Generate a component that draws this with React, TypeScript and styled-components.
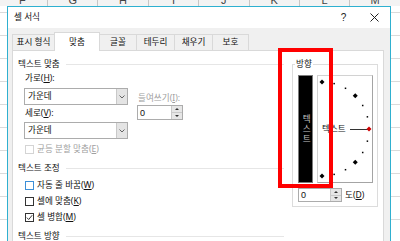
import styled, { createGlobalStyle } from "styled-components";

const GlobalStyle = createGlobalStyle`
    html, body {
        margin:0;
        padding:0;
        background:#fff;
        overflow:hidden;
    }
    body {
        font-family: "Noto Sans", "Noto Sans CJK KR", sans-serif;
        font-size: 8.6px;
        color:#111;
    }
`;

//spreadsheet behind the dialog
const Sheet = styled.div`
    position:relative;
    width:400px;
    height:241px;
    overflow:hidden;
    background-color:#fff;
    background-image: linear-gradient(to bottom, #dadada 1px, transparent 1px);
    background-size: 100% 23px;
    background-position: 0 12px;
`;
const ColumnHeader = styled.div`
    display:flex;
    height:6px;
    overflow:hidden;
    margin-left:-2.4px;
    background-color:#f3f3f3;
`;
const ColumnCell = styled.div`
    flex:0 0 50.4px;
    box-sizing:border-box;
    border-right:1px solid #c6c6c6;
    display:flex;
    align-items:flex-end;
    justify-content:center;
    font-family:"Liberation Sans", sans-serif;
    font-size:11px;
    line-height:11px;
    color:#444;
`;

//dialog window
const Dialog = styled.div`
    position:absolute;
    left:7px;
    top:6px;
    width:384px;
    height:250px;
    box-sizing:border-box;
    border:1px solid #2fb0d0;
    background-color:#f0f0f0;
    display:flex;
    flex-direction:column;
`;
const TitleBar = styled.div`
    height:21px;
    flex:0 0 21px;
    background-color:#fff;
    display:flex;
    align-items:center;
    padding-left:6px;
    line-height:21px;
`;
const TitleButtons = styled.div`
    margin-left:auto;
    display:flex;
`;
const TitleButton = styled.div`
    width:31px;
    height:21px;
    display:flex;
    align-items:center;
    justify-content:center;
    font-family:"Liberation Sans", sans-serif;
    font-size:10px;
    color:#222;
`;
const Body = styled.div`
    flex:1;
    padding:4px 6px 0 4px;
    display:flex;
    flex-direction:column;
`;

//tabs
const TabRow = styled.div`
    display:flex;
    align-items:flex-end;
    height:18px;
`;
const Tab = styled.div<{ $width: number; $active?: boolean }>`
    width:${p => p.$width}px;
    height:${p => (p.$active ? 19 : 16)}px;
    box-sizing:border-box;
    border:1px solid #d9d9d9;
    border-bottom:none;
    margin-right:-1px;
    margin-bottom:${p => (p.$active ? -1 : 0)}px;
    background-color:${p => (p.$active ? "#fff" : "#f0f0f0")};
    position:relative;
    z-index:${p => (p.$active ? 1 : 0)};
    text-align:center;
    line-height:${p => (p.$active ? 18 : 15)}px;
`;
const Panel = styled.div`
    flex:1;
    background-color:#fff;
    border:1px solid #d9d9d9;
    display:flex;
    align-items:flex-start;
`;

//left column
const LeftCol = styled.div`
    width:271px;
    box-sizing:border-box;
    padding:6px 0 0 5px;
`;
const GroupHeader = styled.div<{ $top?: number }>`
    display:flex;
    align-items:center;
    height:14px;
    line-height:14px;
    margin-top:${p => p.$top || 0}px;
    &::after {
        content:"";
        flex:1;
        height:1px;
        margin-left:6px;
        background-color:#e6e6e6;
    }
`;
const FieldBlock = styled.div`
    display:flex;
    margin-left:6px;
`;
const ComboCol = styled.div`
    width:104px;
`;
const FieldLabel = styled.div<{ $disabled?: boolean; $top?: number }>`
    height:14px;
    line-height:14px;
    padding-left:1px;
    margin-top:${p => p.$top || 0}px;
    color:${p => (p.$disabled ? "#a0a0a0" : "#111")};
`;
const Combo = styled.div<{ $top?: number }>`
    height:17px;
    box-sizing:border-box;
    border:1px solid #acacac;
    display:flex;
    margin-top:${p => p.$top || 0}px;
`;
const ComboText = styled.div`
    flex:1;
    padding-left:3px;
    line-height:15px;
`;
const DropButton = styled.div`
    width:10px;
    background-color:#e4e4e4;
    border-left:1px solid #c9c9c9;
    display:flex;
    align-items:center;
    justify-content:center;
`;
const IndentCol = styled.div`
    margin-left:9px;
    padding-top:20px;
`;
const SpinBox = styled.div<{ $width: number; $height: number }>`
    width:${p => p.$width}px;
    height:${p => p.$height}px;
    box-sizing:border-box;
    border:1px solid #acacac;
    display:flex;
    background-color:#fff;
`;
const SpinValue = styled.div`
    flex:1;
    padding-left:2px;
    display:flex;
    align-items:center;
    font-family:"Liberation Sans", sans-serif;
    font-size:9px;
`;
const SpinButtons = styled.div`
    width:10px;
    display:flex;
    flex-direction:column;
    border-left:1px solid #c9c9c9;
`;
const SpinArrow = styled.div<{ $down?: boolean }>`
    flex:1;
    background-color:#e6e6e6;
    display:flex;
    align-items:center;
    justify-content:center;
    border-top:${p => (p.$down ? "1px solid #c9c9c9" : "none")};
    &::before {
        content:"";
        width:0;
        height:0;
        border-left:2px solid transparent;
        border-right:2px solid transparent;
        ${p => (p.$down ? "border-top:2px solid #333;" : "border-bottom:2px solid #333;")}
    }
`;
const CheckRow = styled.div<{ $height: number; $top?: number; $disabled?: boolean }>`
    display:flex;
    align-items:center;
    height:${p => p.$height}px;
    margin-top:${p => p.$top || 0}px;
    margin-left:7px;
    gap:3px;
    color:${p => (p.$disabled ? "#a0a0a0" : "#111")};
`;
const CheckBox = styled.div<{ $color: string }>`
    width:9px;
    height:9px;
    box-sizing:border-box;
    border:1px solid ${p => p.$color};
    background-color:#fff;
    display:flex;
    align-items:center;
    justify-content:center;
`;
const CheckLabel = styled.span`
    line-height:12px;
`;

//orientation group
const Group = styled.fieldset`
    margin:7px 0 0 8px;
    padding:5px 4px 4px 5px;
    width:86px;
    box-sizing:border-box;
    border:1px solid #dcdcdc;
    min-width:0;
`;
const Legend = styled.legend`
    padding:0 1px;
    margin-left:-3px;
    line-height:12px;
`;
const DialRow = styled.div`
    display:flex;
    gap:4px;
`;
const VerticalBox = styled.div`
    width:15px;
    height:108px;
    box-sizing:border-box;
    background-color:#000;
    border:1px solid #7c7c7c;
    display:flex;
    align-items:center;
    justify-content:center;
`;
const VerticalText = styled.span`
    writing-mode:vertical-rl;
    text-orientation:upright;
    letter-spacing:1.4px;
    line-height:1;
    color:#c4c4c4;
`;
const Dial = styled.div`
    position:relative;
    width:56px;
    height:108px;
    box-sizing:border-box;
    border:1px solid;
    border-color:#d2d2d2 #a4a4a4 #a4a4a4 #d2d2d2;
    display:flex;
    align-items:center;
    padding-left:4px;
`;
const DialDrawing = styled.svg`
    position:absolute;
    left:0;
    top:0;
`;
const DialLabel = styled.span`
    line-height:12px;
    position:relative;
`;
const DialLine = styled.div`
    width:18px;
    height:1px;
    margin-left:4px;
    background-color:#333;
`;
const AngleRow = styled.div`
    margin-top:5px;
    display:flex;
    align-items:center;
`;
const DegreeLabel = styled.span`
    margin-left:3px;
    line-height:12px;
`;

//annotation over the screenshot
const Highlight = styled.div`
    position:absolute;
    left:278px;
    top:48px;
    width:55px;
    height:140px;
    box-sizing:border-box;
    border:4px solid #ff0000;
    pointer-events:none;
`;

const columns = ["F", "G", "H", "I", "J", "K", "L", "M"];
const tabs = [
    { label: "표시 형식", width: 43 },
    { label: "맞춤", width: 46, active: true },
    { label: "글꼴", width: 38 },
    { label: "테두리", width: 39 },
    { label: "채우기", width: 39 },
    { label: "보호", width: 37 },
];

function Chevron() {
    return (
        <svg width="6" height="4" viewBox="0 0 6 4">
            <polyline points="0.5,0.5 3,3 5.5,0.5" fill="none" stroke="#555" strokeWidth="0.9" />
        </svg>
    );
}

function DialDots() {
    const cx = 4;
    const cy = 53;
    const r = 47;
    const dots = [];
    for (let a = 90; a >= -90; a -= 15) {
        const rad = (a * Math.PI) / 180;
        const x = cx + r * Math.cos(rad);
        const y = cy - r * Math.sin(rad);
        if (a === 0) {
            dots.push(<polygon key={a} points={`${x},${y - 2.5} ${x + 2.5},${y} ${x},${y + 2.5} ${x - 2.5},${y}`} fill="#d00000" />);
        } else if (a % 45 === 0) {
            dots.push(<polygon key={a} points={`${x},${y - 2.5} ${x + 2.5},${y} ${x},${y + 2.5} ${x - 2.5},${y}`} fill="#000" />);
        } else {
            dots.push(<rect key={a} x={x - 0.75} y={y - 0.75} width="1.5" height="1.5" fill="#000" />);
        }
    }
    return (
        <DialDrawing width="54" height="106" viewBox="0 0 54 106">
            {dots}
        </DialDrawing>
    );
}

function App() {
    return (
        <Sheet>
            <GlobalStyle />
            <ColumnHeader>
                {columns.map(c => <ColumnCell key={c}>{c}</ColumnCell>)}
            </ColumnHeader>
            <Dialog>
                <TitleBar>
                    셀 서식
                    <TitleButtons>
                        <TitleButton>?</TitleButton>
                        <TitleButton>
                            <svg width="9" height="9" viewBox="0 0 9 9">
                                <path d="M0.5 0.5 L8.5 8.5 M8.5 0.5 L0.5 8.5" stroke="#222" strokeWidth="1" />
                            </svg>
                        </TitleButton>
                    </TitleButtons>
                </TitleBar>
                <Body>
                    <TabRow>
                        {tabs.map(t => (
                            <Tab key={t.label} $width={t.width} $active={t.active}>{t.label}</Tab>
                        ))}
                    </TabRow>
                    <Panel>
                        <LeftCol>
                            <GroupHeader>텍스트 맞춤</GroupHeader>
                            <FieldBlock>
                                <ComboCol>
                                    <FieldLabel>가로(<u>H</u>):</FieldLabel>
                                    <Combo $top={3}>
                                        <ComboText>가운데</ComboText>
                                        <DropButton><Chevron /></DropButton>
                                    </Combo>
                                    <FieldLabel $top={1}>세로(<u>V</u>):</FieldLabel>
                                    <Combo $top={2}>
                                        <ComboText>가운데</ComboText>
                                        <DropButton><Chevron /></DropButton>
                                    </Combo>
                                </ComboCol>
                                <IndentCol>
                                    <FieldLabel $disabled>들여쓰기(<u>I</u>):</FieldLabel>
                                    <SpinBox $width={46} $height={15}>
                                        <SpinValue>0</SpinValue>
                                        <SpinButtons>
                                            <SpinArrow />
                                            <SpinArrow $down />
                                        </SpinButtons>
                                    </SpinBox>
                                </IndentCol>
                            </FieldBlock>
                            <CheckRow $height={12} $top={4} $disabled>
                                <CheckBox $color="#d4d4d4" />
                                <CheckLabel>균등 분할 맞춤(<u>E</u>)</CheckLabel>
                            </CheckRow>
                            <GroupHeader $top={6}>텍스트 조정</GroupHeader>
                            <CheckRow $height={16} $top={2}>
                                <CheckBox $color="#3c8fd8" />
                                <CheckLabel>자동 줄 바꿈(<u>W</u>)</CheckLabel>
                            </CheckRow>
                            <CheckRow $height={16}>
                                <CheckBox $color="#333" />
                                <CheckLabel>셀에 맞춤(<u>K</u>)</CheckLabel>
                            </CheckRow>
                            <CheckRow $height={16}>
                                <CheckBox $color="#333">
                                    <svg width="7" height="7" viewBox="0 0 7 7">
                                        <polyline points="0.8,3.6 2.7,5.5 6.2,1.2" fill="none" stroke="#222" strokeWidth="0.9" />
                                    </svg>
                                </CheckBox>
                                <CheckLabel>셀 병합(<u>M</u>)</CheckLabel>
                            </CheckRow>
                            <GroupHeader $top={4}>텍스트 방향</GroupHeader>
                        </LeftCol>
                        <Group>
                            <Legend>방향</Legend>
                            <DialRow>
                                <VerticalBox>
                                    <VerticalText>텍스트</VerticalText>
                                </VerticalBox>
                                <Dial>
                                    <DialDots />
                                    <DialLabel>텍스트</DialLabel>
                                    <DialLine />
                                </Dial>
                            </DialRow>
                            <AngleRow>
                                <SpinBox $width={44} $height={14}>
                                    <SpinValue>0</SpinValue>
                                    <SpinButtons>
                                        <SpinArrow />
                                        <SpinArrow $down />
                                    </SpinButtons>
                                </SpinBox>
                                <DegreeLabel>도(<u>D</u>)</DegreeLabel>
                            </AngleRow>
                        </Group>
                    </Panel>
                </Body>
            </Dialog>
            <Highlight />
        </Sheet>
    );
}

export default App;
